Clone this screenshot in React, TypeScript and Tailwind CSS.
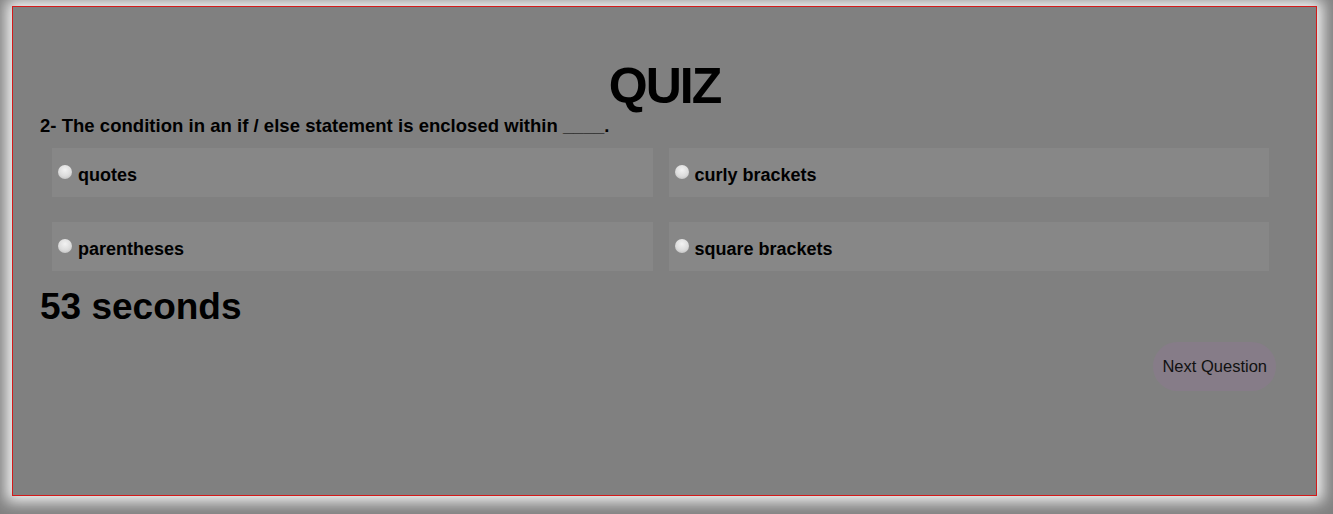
const options = ['quotes', 'curly brackets', 'parentheses', 'square brackets'];

function Radio() {
  return (
    <span className="mt-[17px] ml-[6px] mr-[6px] inline-block h-[14px] w-[14px] shrink-0 rounded-full bg-[radial-gradient(circle_at_50%_35%,#f2f2f2_0%,#dcdcdc_55%,#b5b5b5_100%)]" />
  );
}

export default function App() {
  return (
    <div className="h-[514px] w-full overflow-hidden bg-[#808080] pl-[12px] pt-[6px]">
      <div className="flex h-[490px] w-[1305px] flex-col border border-[#d41a1a] bg-[#808080] px-[27px] shadow-[0_0_14px_6px_#f4f4f4]">
        <h1 className="mt-[54px] text-center font-['Liberation_Sans',sans-serif] text-[50px] leading-[50px] font-bold tracking-[-2px] text-black">
          QUIZ
        </h1>
        <p className="mt-[5px] font-['Liberation_Sans',sans-serif] text-[18.5px] leading-[20px] font-bold tracking-[0.03px] text-black">
          2- The condition in an if / else statement is enclosed within ____.
        </p>
        <div className="mt-[12px] ml-[12px] grid w-[1217px] grid-cols-2 gap-x-[16px] gap-y-[25px]">
          {options.map((o) => (
            <label key={o} className="flex h-[49px] items-start bg-[#878787]">
              <Radio />
              <span className="mt-[16px] font-['Liberation_Sans',sans-serif] text-[18px] leading-[22px] font-bold text-black">
                {o}
              </span>
            </label>
          ))}
        </div>
        <div className="mt-[16px] font-['Liberation_Sans',sans-serif] text-[37px] leading-[40px] font-bold text-black">
          53 seconds
        </div>
        <button className="mt-[15px] mr-[13px] self-end rounded-full bg-[#867c88] px-[9px] py-[14px] font-['Liberation_Sans',sans-serif] text-[16.5px] leading-[21px] text-[#111]">
          Next Question
        </button>
      </div>
    </div>
  );
}
